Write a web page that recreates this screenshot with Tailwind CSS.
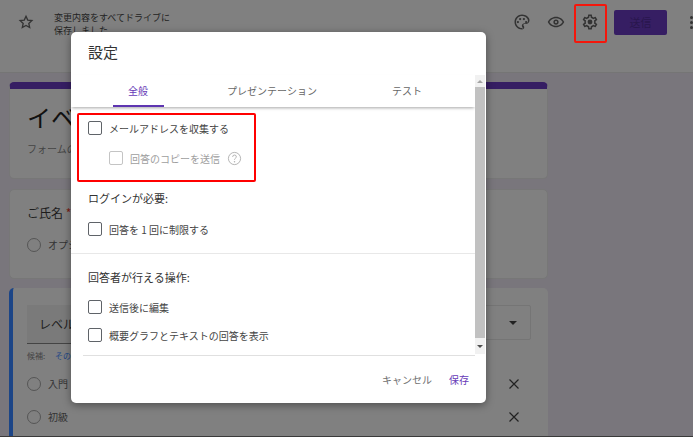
<!DOCTYPE html>
<html lang="ja">
<head>
    <meta charset="UTF-8">
    <title>設定</title>
    <script src="https://cdn.jsdelivr.net/npm/@tailwindcss/browser@4"></script>
</head>
<body class="relative w-[693px] h-[437px] overflow-hidden bg-[#79767c] font-['Noto_Sans_CJK_JP','Liberation_Sans',sans-serif]">
    <!-- header -->
    <header class="flex items-center h-[73px] bg-[#808080] border-b border-[#757575] pl-[18px] pb-[28px]">
        <svg class="w-[16px] h-[16px] text-[#333]" viewBox="0 0 24 24" fill="none" stroke="currentColor" stroke-width="2"><path d="M12 3.500l2.600 5.700 6.200.7-4.600 4.200 1.300 6.100L12 17.100l-5.500 3.100 1.300-6.100-4.600-4.200 6.200-.7z"/></svg>
        <div class="ml-[20px] w-[120px] text-[9px] leading-[13px] text-[#222] pt-[4px]">変更内容をすべてドライブに保存しました</div>
        <div class="ml-auto flex items-center">
            <svg class="w-[18px] h-[18px] text-[#333]" viewBox="0 0 24 24" fill="currentColor"><path d="M12 2C6.500 2 2 6.500 2 12s4.500 10 10 10c1.700 0 3-1.300 3-3 0-.8-.3-1.400-.8-2-.3-.3-.4-.6-.4-1 0-.8.7-1.500 1.500-1.500H17c2.800 0 5-2.200 5-5C22 5.900 17.500 2 12 2zm0 18c-4.400 0-8-3.600-8-8s3.600-8 8-8 8 3.100 8 6.500c0 1.700-1.300 3-3 3h-1.700c-1.900 0-3.500 1.600-3.500 3.500 0 .8.300 1.500.8 2.200.2.200.4.500.4.800 0 .6-.4 1-1 1z"/><circle cx="6.500" cy="12" r="1.500"/><circle cx="9.500" cy="8" r="1.500"/><circle cx="14.500" cy="8" r="1.500"/><circle cx="17.500" cy="12" r="1.500"/></svg>
            <svg class="ml-[16px] w-[18px] h-[18px] text-[#333]" viewBox="0 0 24 24" fill="currentColor"><path d="M12 5C7 5 2.700 8.100 1 12c1.700 3.900 6 7 11 7s9.300-3.100 11-7c-1.700-3.900-6-7-11-7zm0 12c-3.800 0-7.200-2-8.800-5C4.800 9 8.200 7 12 7s7.200 2 8.800 5c-1.600 3-5 5-8.800 5zm0-8.500a3.500 3.500 0 100 7 3.500 3.500 0 000-7zm0 5a1.500 1.500 0 110-3 1.500 1.500 0 010 3z"/></svg>
            <svg class="ml-[16px] w-[18px] h-[18px] text-[#333]" viewBox="0 0 24 24" fill="currentColor"><path d="M19.430 12.980c.04-.32.07-.64.07-.98 0-.34-.03-.66-.07-.98l2.110-1.650c.19-.15.24-.42.12-.64l-2-3.460c-.09-.16-.26-.25-.44-.25-.06 0-.12.01-.17.03l-2.490 1c-.52-.4-1.080-.73-1.690-.98l-.38-2.650C14.460 2.180 14.250 2 14 2h-4c-.25 0-.46.18-.49.42l-.38 2.650c-.61.25-1.170.59-1.690.98l-2.490-1c-.06-.02-.12-.03-.18-.03-.17 0-.34.09-.43.25l-2 3.460c-.13.22-.07.49.12.64l2.110 1.650c-.04.32-.07.65-.07.98 0 .33.03.66.07.98l-2.110 1.650c-.19.15-.24.42-.12.64l2 3.460c.09.16.26.25.44.25.06 0 .12-.01.17-.03l2.490-1c.52.4 1.080.73 1.690.98l.38 2.650c.03.24.24.42.49.42h4c.25 0 .46-.18.49-.42l.38-2.650c.61-.25 1.170-.59 1.690-.98l2.490 1c.06.02.12.03.18.03.17 0 .34-.09.43-.25l2-3.460c.12-.22.07-.49-.12-.64l-2.110-1.650zm-1.980-1.710c.04.31.05.52.05.73 0 .21-.02.43-.05.73l-.14 1.130.89.7 1.080.84-.7 1.210-1.270-.51-1.040-.42-.9.68c-.43.32-.84.56-1.250.73l-1.060.43-.16 1.130-.2 1.350h-1.400l-.19-1.350-.16-1.130-1.060-.43c-.43-.18-.83-.41-1.230-.71l-.91-.7-1.060.43-1.270.51-.7-1.210 1.080-.84.89-.7-.14-1.130c-.03-.31-.05-.54-.05-.74s.02-.43.05-.73l.14-1.130-.89-.7-1.080-.84.7-1.210 1.270.51 1.040.42.9-.68c.43-.32.84-.56 1.250-.73l1.060-.43.16-1.130.2-1.350h1.390l.19 1.350.16 1.130 1.060.43c.43.18.83.41 1.230.71l.91.7 1.060-.43 1.270-.51.7 1.210-1.070.85-.89.7.14 1.130z"/><circle cx="12" cy="12" r="3.200"/></svg>
            <div class="ml-[15px] w-[53px] h-[25px] rounded-[2px] bg-[#361e63] text-[#29164d] text-[11px] flex items-center justify-center">送信</div>
            <div class="ml-[23px] mr-[-1px] flex flex-col gap-[2px] w-[4px]">
                <span class="w-[3px] h-[3px] rounded-full bg-[#333]"></span>
                <span class="w-[3px] h-[3px] rounded-full bg-[#333]"></span>
                <span class="w-[3px] h-[3px] rounded-full bg-[#333]"></span>
            </div>
        </div>
    </header>

    <!-- form behind the dialog -->
    <main class="ml-[9px] w-[539px] mt-[9px] flex flex-col gap-[10px]">
        <section class="h-[97px] rounded-[5px] bg-[#808080] border border-[#777] border-t-[7px] border-t-[#361e63] pl-[17px] pt-[10px]">
            <div class="text-[24px] leading-[36px] text-[#111]">イベ</div>
            <div class="mt-[6px] text-[10px] text-[#444]">フォームの説明</div>
        </section>
        <section class="h-[90px] rounded-[5px] bg-[#808080] border border-[#777] pl-[17px] pt-[14px]">
            <div class="text-[12px] leading-[18px] text-[#1c1c1c]">ご氏名 <span class="text-[#7a1c14]">*</span></div>
            <div class="mt-[15px] flex items-center gap-[7px]">
                <span class="w-[14px] h-[14px] rounded-full border-[1.500px] border-[#555]"></span>
                <span class="text-[10px] text-[#333]">オプション 1</span>
            </div>
        </section>
        <section class="-mt-px h-[160px] rounded-[5px] bg-[#808080] border-l-[4px] border-[#1c4587] pl-[14px] pr-[17px] pt-[17px]">
            <div class="flex gap-[20px] items-start">
                <div class="w-[273px] h-[39px] flex items-center bg-[#7a7a7a] border-b border-[#444] pl-[12px] text-[12px] text-[#1c1c1c]">レベル</div>
                <div class="flex-1 h-[35px] flex items-center justify-end pr-[13px] rounded-[2px] border border-[#757575]">
                    <span class="border-x-[4px] border-x-transparent border-t-[4px] border-t-[#222]"></span>
                </div>
            </div>
            <div class="mt-[6px] text-[8px] leading-[12px] text-[#444]">候補: <span class="ml-[8px] text-[#1c4587]">その他</span></div>
            <div class="mt-[14px] mr-[12px] flex items-center gap-[7px]">
                <span class="w-[14px] h-[14px] rounded-full border-[1.500px] border-[#555]"></span>
                <span class="text-[10px] text-[#333]">入門</span>
                <svg class="ml-auto w-[10px] h-[10px] text-[#222]" viewBox="0 0 10 10" stroke="currentColor" stroke-width="1.200"><path d="M.5.500l9 9M9.500.500l-9 9"/></svg>
            </div>
            <div class="mt-[18px] mr-[12px] flex items-center gap-[7px]">
                <span class="w-[14px] h-[14px] rounded-full border-[1.500px] border-[#555]"></span>
                <span class="text-[10px] text-[#333]">初級</span>
                <svg class="ml-auto w-[10px] h-[10px] text-[#222]" viewBox="0 0 10 10" stroke="currentColor" stroke-width="1.200"><path d="M.5.500l9 9M9.500.500l-9 9"/></svg>
            </div>
        </section>
    </main>

    <!-- settings dialog -->
    <div class="absolute left-[71px] top-[32px] w-[415px] h-[371px] flex flex-col rounded-[5px] bg-white shadow-[0_2px_8px_rgba(0,0,0,0.4)] overflow-hidden">
        <h2 class="pl-[17px] pt-[8px] h-[43px] text-[15px] leading-[24px] text-[#333]">設定</h2>
        <div class="relative flex h-[32px] text-[10px] text-[#666] w-[404px] shadow-[0_2px_3px_-1px_rgba(0,0,0,0.35)] z-10">
            <div class="w-[134px] flex items-start justify-center pt-[8px] text-[#673ab7] relative">全般
                <span class="absolute left-[42px] bottom-0 w-[51px] h-[2px] bg-[#5e35b1]"></span>
            </div>
            <div class="w-[134px] flex items-start justify-center pt-[8px]">プレゼンテーション</div>
            <div class="w-[136px] flex items-start justify-center pt-[8px]">テスト</div>
        </div>

        <div class="flex-1 min-h-0 w-[404px] flex flex-col">
            <div class="pl-[17px] pt-[13px] text-[10px] text-[#444]">
                <label class="flex items-center h-[16px] gap-[7px]"><span class="w-[14px] h-[14px] rounded-[2px] border-[1.500px] border-[#5f6368]"></span>メールアドレスを収集する</label>
                <label class="mt-[14px] ml-[21px] flex items-center h-[16px] gap-[7px] text-[#9e9e9e]"><span class="w-[14px] h-[14px] rounded-[2px] border-[1.500px] border-[#c4c4c4]"></span>回答のコピーを送信
                    <svg class="w-[15px] h-[15px] text-[#b0b0b0]" viewBox="0 0 16 16" fill="none" stroke="currentColor"><circle cx="8" cy="8" r="6.500"/><path d="M6 6.300a2 2 0 114 0c0 1.300-2 1.500-2 3"/><circle cx="8" cy="11.500" r=".8" fill="currentColor" stroke="none"/></svg>
                </label>
                <div class="mt-[24px] text-[11px] leading-[16px] text-[#333]">ログインが必要:</div>
                <label class="mt-[15px] flex items-center h-[16px] gap-[7px]"><span class="w-[14px] h-[14px] rounded-[2px] border-[1.500px] border-[#5f6368]"></span>回答を 1 回に制限する</label>
            </div>
            <div class="mt-[16px] border-t border-[#e8e8e8]"></div>
            <div class="pl-[17px] pt-[15px] text-[10px] text-[#444]">
                <div class="text-[11px] leading-[16px] text-[#333]">回答者が行える操作:</div>
                <label class="mt-[14px] flex items-center h-[16px] gap-[7px]"><span class="w-[14px] h-[14px] rounded-[2px] border-[1.500px] border-[#5f6368]"></span>送信後に編集</label>
                <label class="mt-[12px] flex items-center h-[16px] gap-[7px]"><span class="w-[14px] h-[14px] rounded-[2px] border-[1.500px] border-[#5f6368]"></span>概要グラフとテキストの回答を表示</label>
            </div>
        </div>

        <div class="h-[48px] w-[392px] ml-[12px] border-t border-[#e0e0e0] flex items-center justify-end gap-[17px] pr-[6px] pb-[1px] text-[10px]">
            <span class="text-[#707070]">キャンセル</span>
            <span class="text-[#673ab7]">保存</span>
        </div>

        <!-- scrollbar sits over the tab row -->
        <div class="absolute z-20 left-[404px] top-[43px] w-[10px] h-[279px] flex flex-col bg-[#f1f1f1]">
            <div class="h-[12px] flex items-center justify-center"><span class="border-x-[3px] border-x-transparent border-b-[3px] border-b-[#a3a3a3]"></span></div>
            <div class="flex-1 bg-[#c1c1c1]"></div>
            <div class="h-[16px] flex items-center justify-center"><span class="border-x-[3px] border-x-transparent border-t-[3px] border-t-[#505050]"></span></div>
        </div>
    </div>

    <!-- red annotation boxes -->
    <div class="absolute left-[77px] top-[113px] w-[179px] h-[69px] border-2 border-[#f00] rounded-[2px]"></div>
    <div class="absolute left-[574px] top-[4px] w-[33px] h-[39px] border-2 border-[#f5170c] rounded-[2px]"></div>
    <div class="absolute left-0 bottom-0 w-full h-px bg-[#3a3a3a]"></div>
</body>
</html>
